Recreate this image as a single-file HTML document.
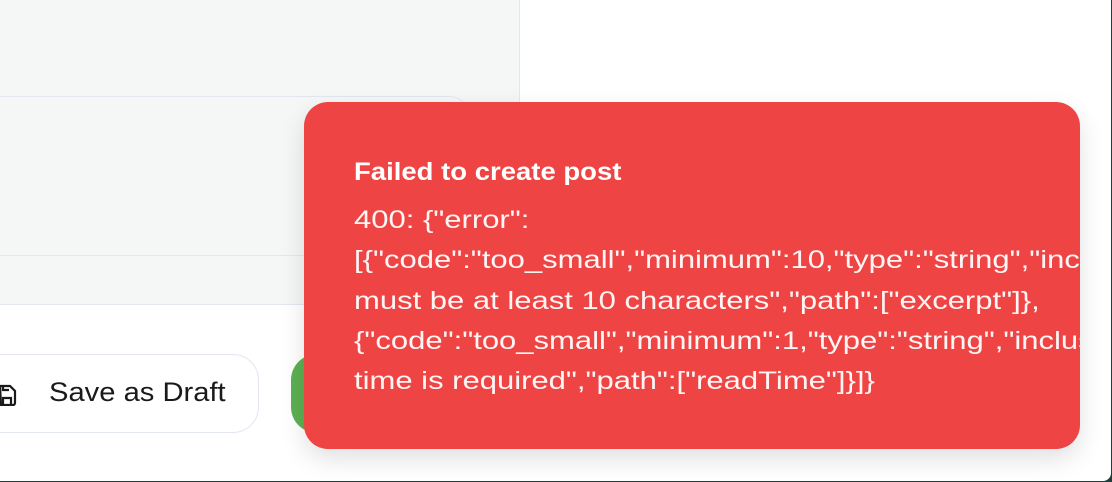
<!DOCTYPE html>
<html><head><meta charset="utf-8"><style>
html,body{margin:0;padding:0;width:1112px;height:482px;overflow:hidden;background:#1f3d3a;}
.page{position:absolute;left:0;top:0;width:1111px;height:481px;background:#fff;border-bottom-right-radius:8px;overflow:hidden;font-family:"Liberation Sans",sans-serif;}
.panel{position:absolute;left:-10px;top:-10px;width:529px;height:314px;background:#f5f7f7;border-right:1.5px solid #e2e6f0;border-bottom:1.5px solid #e2e6f0;}
.inner{position:absolute;left:-20px;top:96px;width:490px;height:158px;border:1.5px solid #e2e6f0;border-radius:0 22px 0 0;border-left:none;}
.draft{position:absolute;left:-30px;top:354px;width:287px;height:77px;border:1.5px solid #e2e6f0;border-radius:26px;background:#fff;}
.draft span{position:absolute;left:78px;top:22px;font-size:27px;color:#1a1a1a;transform:scaleX(1.08);transform-origin:left;}
.green{position:absolute;left:291px;top:354px;width:100px;height:79px;background:#5cb052;border-radius:26px;}
.toast{position:absolute;left:304px;top:102px;width:776px;height:347px;background:#ef4444;border-radius:24px;overflow:hidden;box-shadow:0 10px 25px rgba(0,0,0,0.12);color:#fff;}
.t{position:absolute;left:50px;top:56px;font-size:25px;font-weight:bold;transform:scaleX(1.1);transform-origin:left;white-space:nowrap;}
.b{position:absolute;left:50px;top:98px;font-size:25px;line-height:40.3px;white-space:nowrap;color:#fff5f5;transform:scaleX(1.24);transform-origin:left;}
</style></head><body><div class="page">
<div class="panel"></div>
<div class="inner"></div>
<div class="draft">
<svg style="position:absolute;left:28px;top:27px" width="18" height="24" viewBox="0 0 18 24" fill="none" stroke="#1a1a1a" stroke-width="2.2"><path d="M1 4 h10 l5 5 v12 a2 2 0 0 1 -2 2 h-12 z"/><path d="M4 23 v-7 h8 v7"/><path d="M4 4 v4 h6"/></svg>
<span>Save as Draft</span></div>
<div class="green"></div>
<div class="toast">
<div class="t">Failed to create post</div>
<div class="b">400: {"error":<br>[{"code":"too_small","minimum":10,"type":"string","inclusive":true,"exact":false,"message":"Excerpt<br>must be at least 10 characters","path":["excerpt"]},<br>{"code":"too_small","minimum":1,"type":"string","inclusive":true,"exact":false,"message":"Read<br>time is required","path":["readTime"]}]}</div>
</div>
</div></body></html>
